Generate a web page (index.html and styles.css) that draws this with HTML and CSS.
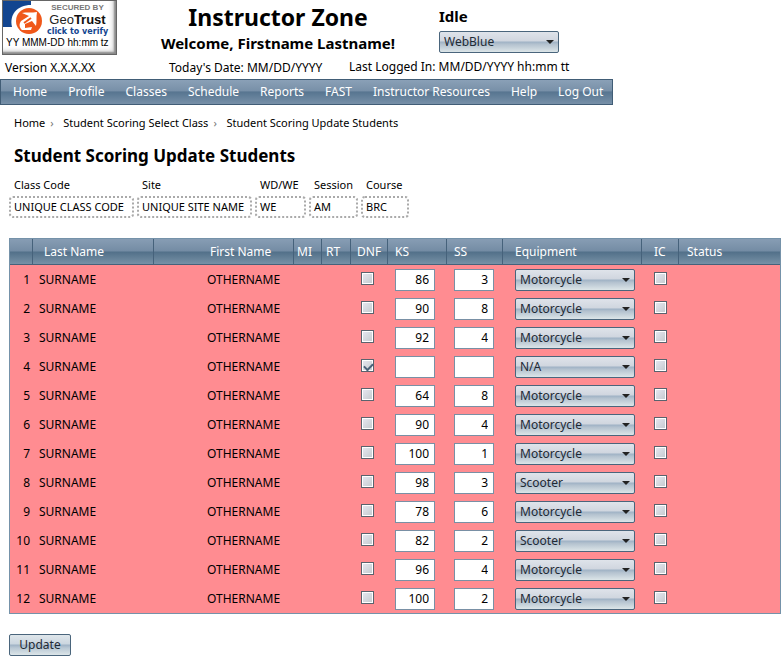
FILE: index.html
```html
<!DOCTYPE html>
<html lang="en">
<head>
<meta charset="utf-8">
<title>Instructor Zone</title>
<link rel="stylesheet" href="styles.css">
</head>
<body>
<header class="masthead">
  <div class="seal-col">
    <a class="seal" href="#" aria-label="GeoTrust, click to verify">
      <svg class="seal-logo" viewBox="0 0 42 34" aria-hidden="true">
        <path d="M0 0H28V6L10 26H0Z" fill="#124590"/>
        <path d="M9 26C6 14 14 4 28 4V12L14 26Z" fill="#fff"/>
        <circle cx="26" cy="20" r="13" fill="#f0581a"/>
        <path d="M19 12C23 11 29 12 34 11C33 16 34 21 33 25L29 20L22 23V27L29 26L28 29H19C16 26 16 23 18 20L26 15Z" fill="#fff"/>
        <path d="M21 22L28 17" stroke="#f0581a" stroke-width="2"/>
      </svg>
      <span class="seal-words">
        <span class="seal-by">SECURED BY</span>
        <span class="seal-name">Geo<b>Trust</b></span>
        <span class="seal-click">click to verify</span>
      </span>
      <span class="seal-date">YY MMM-DD hh:mm tz</span>
    </a>
    <span class="version">Version X.X.X.XX</span>
  </div>
  <div class="title-col">
    <h1>Instructor Zone</h1>
    <p class="welcome">Welcome, Firstname Lastname!</p>
    <p class="today">Today's Date: MM/DD/YYYY</p>
  </div>
  <div class="state-col">
    <label class="state" for="theme">Idle</label>
    <span class="pick"><select id="theme"><option>WebBlue</option></select></span>
    <p class="logged">Last Logged In: MM/DD/YYYY hh:mm tt</p>
  </div>
</header>
<nav class="menu">
  <a href="#">Home</a><a href="#">Profile</a><a href="#">Classes</a><a href="#">Schedule</a><a href="#">Reports</a><a href="#">FAST</a><a href="#">Instructor Resources</a><a href="#">Help</a><a href="#">Log Out</a>
</nav>
<main>
  <nav class="crumbs">
    <a href="#">Home</a><span class="sep">›</span><a href="#">Student Scoring Select Class</a><span class="sep">›</span><a href="#">Student Scoring Update Students</a>
  </nav>
  <h2>Student Scoring Update Students</h2>
  <dl class="facts">
    <div class="code"><dt>Class Code</dt><dd>UNIQUE CLASS CODE</dd></div>
    <div class="site"><dt>Site</dt><dd>UNIQUE SITE NAME</dd></div>
    <div class="day"><dt>WD/WE</dt><dd>WE</dd></div>
    <div class="session"><dt>Session</dt><dd>AM</dd></div>
    <div class="course"><dt>Course</dt><dd>BRC</dd></div>
  </dl>
  <form>
    <table class="scores">
      <colgroup><col class="c-num"><col class="c-last"><col class="c-first"><col class="c-mi"><col class="c-rt"><col class="c-dnf"><col class="c-ks"><col class="c-ss"><col class="c-eq"><col class="c-ic"><col></colgroup>
      <thead><tr><th></th><th>Last Name</th><th>First Name</th><th>MI</th><th>RT</th><th>DNF</th><th>KS</th><th>SS</th><th>Equipment</th><th>IC</th><th>Status</th></tr></thead>
      <tbody>
        <tr><td>1</td><td>SURNAME</td><td>OTHERNAME</td><td></td><td></td><td><input type="checkbox" aria-label="DNF"></td><td><input type="text" aria-label="KS" value="86"></td><td><input type="text" aria-label="SS" value="3"></td><td><span class="pick"><select aria-label="Equipment"><option>Motorcycle</option></select></span></td><td><input type="checkbox" aria-label="IC"></td><td></td></tr>
        <tr><td>2</td><td>SURNAME</td><td>OTHERNAME</td><td></td><td></td><td><input type="checkbox" aria-label="DNF"></td><td><input type="text" aria-label="KS" value="90"></td><td><input type="text" aria-label="SS" value="8"></td><td><span class="pick"><select aria-label="Equipment"><option>Motorcycle</option></select></span></td><td><input type="checkbox" aria-label="IC"></td><td></td></tr>
        <tr><td>3</td><td>SURNAME</td><td>OTHERNAME</td><td></td><td></td><td><input type="checkbox" aria-label="DNF"></td><td><input type="text" aria-label="KS" value="92"></td><td><input type="text" aria-label="SS" value="4"></td><td><span class="pick"><select aria-label="Equipment"><option>Motorcycle</option></select></span></td><td><input type="checkbox" aria-label="IC"></td><td></td></tr>
        <tr><td>4</td><td>SURNAME</td><td>OTHERNAME</td><td></td><td></td><td><input type="checkbox" aria-label="DNF" checked></td><td><input type="text" aria-label="KS" value=""></td><td><input type="text" aria-label="SS" value=""></td><td><span class="pick"><select aria-label="Equipment"><option>N/A</option></select></span></td><td><input type="checkbox" aria-label="IC"></td><td></td></tr>
        <tr><td>5</td><td>SURNAME</td><td>OTHERNAME</td><td></td><td></td><td><input type="checkbox" aria-label="DNF"></td><td><input type="text" aria-label="KS" value="64"></td><td><input type="text" aria-label="SS" value="8"></td><td><span class="pick"><select aria-label="Equipment"><option>Motorcycle</option></select></span></td><td><input type="checkbox" aria-label="IC"></td><td></td></tr>
        <tr><td>6</td><td>SURNAME</td><td>OTHERNAME</td><td></td><td></td><td><input type="checkbox" aria-label="DNF"></td><td><input type="text" aria-label="KS" value="90"></td><td><input type="text" aria-label="SS" value="4"></td><td><span class="pick"><select aria-label="Equipment"><option>Motorcycle</option></select></span></td><td><input type="checkbox" aria-label="IC"></td><td></td></tr>
        <tr><td>7</td><td>SURNAME</td><td>OTHERNAME</td><td></td><td></td><td><input type="checkbox" aria-label="DNF"></td><td><input type="text" aria-label="KS" value="100"></td><td><input type="text" aria-label="SS" value="1"></td><td><span class="pick"><select aria-label="Equipment"><option>Motorcycle</option></select></span></td><td><input type="checkbox" aria-label="IC"></td><td></td></tr>
        <tr><td>8</td><td>SURNAME</td><td>OTHERNAME</td><td></td><td></td><td><input type="checkbox" aria-label="DNF"></td><td><input type="text" aria-label="KS" value="98"></td><td><input type="text" aria-label="SS" value="3"></td><td><span class="pick"><select aria-label="Equipment"><option>Scooter</option></select></span></td><td><input type="checkbox" aria-label="IC"></td><td></td></tr>
        <tr><td>9</td><td>SURNAME</td><td>OTHERNAME</td><td></td><td></td><td><input type="checkbox" aria-label="DNF"></td><td><input type="text" aria-label="KS" value="78"></td><td><input type="text" aria-label="SS" value="6"></td><td><span class="pick"><select aria-label="Equipment"><option>Motorcycle</option></select></span></td><td><input type="checkbox" aria-label="IC"></td><td></td></tr>
        <tr><td>10</td><td>SURNAME</td><td>OTHERNAME</td><td></td><td></td><td><input type="checkbox" aria-label="DNF"></td><td><input type="text" aria-label="KS" value="82"></td><td><input type="text" aria-label="SS" value="2"></td><td><span class="pick"><select aria-label="Equipment"><option>Scooter</option></select></span></td><td><input type="checkbox" aria-label="IC"></td><td></td></tr>
        <tr><td>11</td><td>SURNAME</td><td>OTHERNAME</td><td></td><td></td><td><input type="checkbox" aria-label="DNF"></td><td><input type="text" aria-label="KS" value="96"></td><td><input type="text" aria-label="SS" value="4"></td><td><span class="pick"><select aria-label="Equipment"><option>Motorcycle</option></select></span></td><td><input type="checkbox" aria-label="IC"></td><td></td></tr>
        <tr><td>12</td><td>SURNAME</td><td>OTHERNAME</td><td></td><td></td><td><input type="checkbox" aria-label="DNF"></td><td><input type="text" aria-label="KS" value="100"></td><td><input type="text" aria-label="SS" value="2"></td><td><span class="pick"><select aria-label="Equipment"><option>Motorcycle</option></select></span></td><td><input type="checkbox" aria-label="IC"></td><td></td></tr>
      </tbody>
    </table>
    <button class="update" type="submit">Update</button>
  </form>
</main>
</body>
</html>
```
FILE: styles.css
```css
* { box-sizing: border-box; }
body {
  margin: 0;
  background: #fff;
  color: #000;
  font: 12px/16px "Noto Sans", "Open Sans", sans-serif;
}
h1, h2, p, dl, dd { margin: 0; }
a { color: inherit; text-decoration: none; }
input, select, button { font: inherit; margin: 0; }

/* Masthead */
.masthead { display: flex; height: 79px; }
.seal-col { width: 158px; padding-left: 2px; }
.seal {
  display: grid;
  grid-template: 36px 1fr / 42px 1fr;
  width: 115px;
  height: 55px;
  border: 1px solid #666;
  box-shadow: inset -2px -2px 2px #888, inset -4px -4px 4px #ddd;
  font-family: "Liberation Sans", sans-serif;
}
.seal-logo { width: 42px; height: 34px; }
.seal-words { display: flex; flex-direction: column; align-items: center; padding: 2px 6px 0 0; }
.seal-by { color: #777; font: bold 8px/10px "Liberation Sans", sans-serif; white-space: nowrap; }
.seal-name { color: #222; font-size: 13px; line-height: 14px; }
.seal-name b { color: #111; }
.seal-click { color: #124590; font: bold 8px/10px "DejaVu Sans", sans-serif; white-space: nowrap; }
.seal-date { grid-column: 1 / 3; padding-left: 3px; font-size: 10px; line-height: 12px; white-space: nowrap; }
.version { display: block; padding: 5px 0 0 3px; }
.title-col { width: 240px; text-align: center; }
h1 { padding-top: 3px; font-size: 23px; line-height: 28px; }
.welcome { padding-top: 2px; font-size: 15px; line-height: 20px; font-weight: bold; white-space: nowrap; }
.today { padding: 7px 0 0 11px; text-align: left; }
.state-col { padding-left: 41px; }
.state { display: block; padding: 6px 0 5px; font-size: 15px; line-height: 20px; font-weight: bold; }
.logged { margin-left: -90px; padding-top: 6px; white-space: nowrap; }

/* Drop-downs */
.pick { position: relative; display: block; width: 120px; height: 22px; }
.pick select {
  appearance: none;
  display: block;
  width: 100%;
  height: 100%;
  padding: 0 20px 0 4px;
  border: 1px solid #4a657c;
  border-radius: 2px;
  background: linear-gradient(#dfe3ea, #d0d6df 45%, #9fb2c5 50%, #b4c2cf 62%, #dce5e8);
  color: #1e2a35;
}
.pick::after {
  content: "";
  position: absolute;
  top: 9px;
  right: 5px;
  border: 4px solid transparent;
  border-top-color: #222;
  border-bottom: 0;
}

/* Menu bar */
.menu {
  display: flex;
  align-items: center;
  gap: 21px;
  width: fit-content;
  height: 26px;
  padding: 0 9px 0 12px;
  border: 1px solid #415d76;
  background: linear-gradient(#8aa0b7, #7890a8 45%, #577590 50%, #7790a8);
  color: #fff;
  white-space: nowrap;
}

/* Breadcrumbs and class details */
main { padding: 10px 1px 0 9px; }
.crumbs { display: flex; padding-left: 5px; font-size: 11px; }
.sep { width: 18px; padding-left: 5px; color: #777; }
h2 { padding: 12px 0 0 5px; font-size: 17px; line-height: 26px; }
.facts { display: flex; gap: 3px; padding-top: 8px; }
.facts dt { padding-left: 5px; font-size: 11px; white-space: nowrap; }
.facts dd {
  height: 22px;
  margin-top: 3px;
  padding-left: 3px;
  border: 2px dotted #aaa;
  border-radius: 4px;
  font-size: 11px;
  line-height: 18px;
  white-space: nowrap;
}
.code { width: 125px; }
.site { width: 115px; }
.day { width: 51px; }
.session { width: 49px; }
.course { width: 48px; }

/* Score table */
.scores {
  width: 100%;
  margin-top: 20px;
  border: 1px solid #7592a9;
  border-spacing: 0;
  table-layout: fixed;
  background: #ff8c91;
}
.c-num { width: 23px; }
.c-last { width: 121px; }
.c-first { width: 140px; }
.c-mi { width: 28px; }
.c-rt { width: 29px; }
.c-dnf { width: 37px; }
.c-ks { width: 59px; }
.c-ss { width: 56px; }
.c-eq { width: 139px; }
.c-ic { width: 37px; }
.scores th {
  height: 26px;
  padding: 0 0 0 3px;
  border-right: 1px solid #46627b;
  border-bottom: 1px solid #46627b;
  background: linear-gradient(#879db4, #748ca4 48%, #527089 52%, #7791a6);
  color: #fff;
  font-weight: normal;
  text-align: left;
  white-space: nowrap;
}
.scores th:last-child { padding-left: 8px; border-right: 0; }
.scores th:nth-child(2) { padding-left: 11px; }
.scores th:nth-child(3) { padding-left: 56px; }
.scores th:nth-child(5) { padding-left: 4px; }
.scores th:nth-child(6) { padding-left: 6px; }
.scores th:nth-child(7), .scores th:nth-child(8) { padding-left: 7px; }
.scores th:nth-child(9), .scores th:nth-child(10) { padding-left: 12px; }
.scores td { height: 29px; padding: 0; }
.scores td:nth-child(1) { padding-right: 3px; text-align: right; }
.scores td:nth-child(2) { padding-left: 6px; }
.scores td:nth-child(3) { padding-left: 53px; }
.scores td:nth-child(6) { padding-left: 10px; }
.scores td:nth-child(10) { padding-left: 12px; }
.scores td:nth-child(7), .scores td:nth-child(8) { padding-left: 7px; }
.scores td:nth-child(9) { padding-left: 12px; }
.scores input[type="text"] {
  display: block;
  width: 40px;
  height: 22px;
  padding: 0 5px;
  border: 1px solid #7990a5;
  background: #fff;
  text-align: right;
}
.scores input[type="checkbox"] {
  appearance: none;
  display: block;
  width: 13px;
  height: 13px;
  margin-bottom: 3px;
  border: 1px solid #59636e;
  background: linear-gradient(135deg, #e8e8f2, #c3c9cd);
  box-shadow: inset 0 0 0 1px #fff;
}
.scores input[type="checkbox"]:checked::after {
  content: "";
  display: block;
  width: 7px;
  height: 4px;
  margin: 3px 2px;
  border: solid #4a627a;
  border-width: 0 0 2px 2px;
  transform: rotate(-45deg);
}
.update {
  display: block;
  width: 62px;
  height: 22px;
  margin-top: 20px;
  padding: 0;
  border: 1px solid #4a657c;
  border-radius: 2px;
  background: linear-gradient(#dfe6eb, #cbd6df 45%, #9fb2c5 50%, #b9c8d4 65%, #dce5e8);
  color: #1e2a35;
}
```
